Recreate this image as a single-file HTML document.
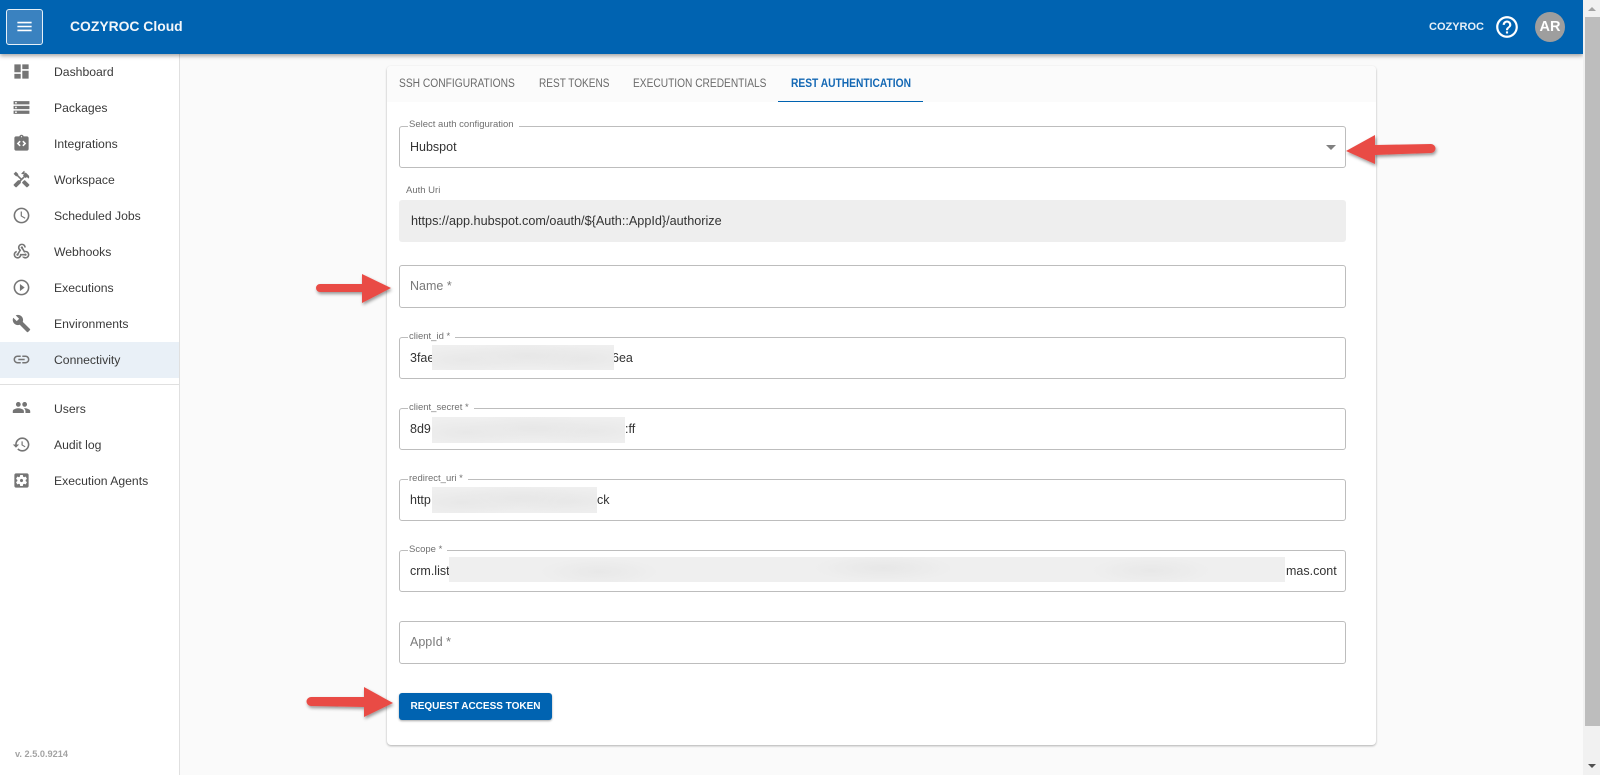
<!DOCTYPE html>
<html><head><meta charset="utf-8"><title>COZYROC Cloud</title>
<style>
*{box-sizing:border-box}
html,body{margin:0;padding:0;width:1600px;height:775px;overflow:hidden;background:#fafafa;font-family:"Liberation Sans",Arial,sans-serif;color:#333}
.a{position:absolute;white-space:nowrap}
#hdr{left:0;top:0;width:1583px;height:54px;background:#0063b1;box-shadow:0 2px 4px rgba(0,0,0,.35);z-index:5}
#btn{left:6px;top:9px;width:37px;height:36px;background:#3a82c0;border:1px solid #e6f0f8;border-radius:3px}
#side{left:0;top:54px;width:180px;height:721px;background:#fff;border-right:1px solid #e0e0e0}
.m{left:54px;font-size:12.2px;line-height:16px;height:16px;color:#3a3a3a}
.i{left:12px;width:19px;height:19px;fill:#757575}
#card{left:387px;top:66px;width:989px;height:679px;background:#fff;border-radius:4px;box-shadow:0 1px 2px rgba(0,0,0,.3)}
#tabs{left:387px;top:66px;width:989px;height:36px;background:#fbfbfb;border-radius:4px 4px 0 0}
.t{top:77px;font-size:11.5px;line-height:14px;color:#6a6a6a;transform-origin:0 50%}
.f{left:399px;width:947px;border:1px solid #bdbdbd;border-radius:3px;background:#fff}
.l{left:408px;font-size:9.5px;line-height:12px;padding:0 5px 0 1px;background:#fff;color:#707070}
.v{left:410px;font-size:12.5px;line-height:16px;color:#333}
.p{left:410px;font-size:12.5px;line-height:16px;color:#7a7a7a}
.b{background:radial-gradient(ellipse 60px 14px at 18% 60%,#e8e8e8,transparent),radial-gradient(ellipse 70px 14px at 52% 45%,#e7e7e7,transparent),radial-gradient(ellipse 60px 14px at 84% 55%,#e8e8e8,transparent),#efefef}
</style></head><body>

<div class="a" id="side"></div>
<div class="a" style="left:0;top:342px;width:179px;height:36px;background:#e9f0f7"></div>
<div class="a" style="left:0;top:384px;width:179px;height:1px;background:#e0e0e0"></div>

<svg class="a i" style="top:62px" viewBox="0 0 24 24"><path d="M3 13h8V3H3v10zm0 8h8v-6H3v6zm10 0h8V11h-8v10zm0-18v6h8V3h-8z"/></svg>
<div class="a m" style="top:64px">Dashboard</div>
<svg class="a i" style="top:98px" viewBox="0 0 24 24"><path d="M2 20h20v-4H2v4zm2-3h2v2H4v-2zM2 4v4h20V4H2zm4 3H4V5h2v2zm-4 7h20v-4H2v4zm2-3h2v2H4v-2z"/></svg>
<div class="a m" style="top:100px">Packages</div>
<svg class="a i" style="top:134px" viewBox="0 0 24 24"><path d="M19 3h-4.18C14.4 1.84 13.3 1 12 1s-2.4.84-2.82 2H5c-1.1 0-2 .9-2 2v14c0 1.1.9 2 2 2h14c1.1 0 2-.9 2-2V5c0-1.1-.9-2-2-2zm-8 11.17-1.41 1.42L6 12l3.59-3.59L11 9.83 8.83 12 11 14.17zm1-9.92c-.41 0-.75-.34-.75-.75s.34-.75.75-.75.75.34.75.75-.34.75-.75.75zm2.41 11.34L13 14.17 15.17 12 13 9.83l1.41-1.42L18 12l-3.59 3.59z"/></svg>
<div class="a m" style="top:136px">Integrations</div>
<svg class="a i" style="top:170px" viewBox="0 0 24 24"><path d="M21.67 18.17l-5.3-5.3h-.99l-2.54 2.54v.99l5.3 5.3c.39.39 1.02.39 1.41 0l2.12-2.12c.39-.38.39-1.02 0-1.41z"/><path d="M17.34 10.19l1.41-1.41 2.12 2.12c1.17-1.17 1.17-3.07 0-4.24l-3.54-3.54-1.41 1.41V1.71l-.7-.71-3.54 3.54.71.71h2.83l-1.41 1.41 1.06 1.06-2.89 2.89-4.13-4.13V5.06L4.83 2.04 2 4.87 5.03 7.9h1.41l4.13 4.13-.85.85H7.61l-5.3 5.3c-.39.39-.39 1.02 0 1.41l2.12 2.12c.39.39 1.02.39 1.41 0l5.3-5.3v-2.12l5.15-5.15 1.05 1.05z"/></svg>
<div class="a m" style="top:172px">Workspace</div>
<svg class="a i" style="top:206px" viewBox="0 0 24 24"><path d="M11.99 2C6.47 2 2 6.48 2 12s4.47 10 9.99 10C17.52 22 22 17.52 22 12S17.52 2 11.99 2zM12 20c-4.42 0-8-3.58-8-8s3.58-8 8-8 8 3.58 8 8-3.58 8-8 8z"/><path d="M12.5 7H11v6l5.25 3.15.75-1.23-4.5-2.67z"/></svg>
<div class="a m" style="top:208px">Scheduled Jobs</div>
<svg class="a i" style="top:242px" viewBox="0 0 24 24"><path d="M10 15h5.88c.27-.31.67-.5 1.12-.5.83 0 1.5.67 1.5 1.5s-.67 1.5-1.5 1.5c-.44 0-.84-.19-1.12-.5H11.9c-.46 2.28-2.48 4-4.9 4-2.76 0-5-2.24-5-5 0-2.42 1.72-4.44 4-4.9v2.07c-1.16.41-2 1.53-2 2.83 0 1.65 1.35 3 3 3s3-1.35 3-3v-1zm2.5-11c1.65 0 3 1.35 3 3h2c0-2.76-2.24-5-5-5s-5 2.24-5 5c0 1.43.6 2.71 1.55 3.62l-2.35 3.9c-.68.14-1.2.75-1.2 1.48 0 .83.67 1.5 1.5 1.5s1.5-.67 1.5-1.5c0-.16-.02-.31-.07-.45l3.38-5.63C10.49 9.61 9.5 8.42 9.5 7c0-1.65 1.35-3 3-3zm4.5 9c-.64 0-1.23.2-1.72.54l-3.05-5.07C11.53 8.35 11 7.74 11 7c0-.83.67-1.5 1.5-1.5S14 6.17 14 7c0 .15-.02.29-.06.43l2.19 3.65c.28-.05.57-.08.87-.08 2.76 0 5 2.24 5 5s-2.24 5-5 5c-1.85 0-3.47-1.01-4.33-2.5h2.67c.48.32 1.05.5 1.66.5 1.65 0 3-1.35 3-3s-1.35-3-3-3z"/></svg>
<div class="a m" style="top:244px">Webhooks</div>
<svg class="a i" style="top:278px" viewBox="0 0 24 24"><path d="M10 16.5l6-4.5-6-4.5v9zM12 2C6.48 2 2 6.48 2 12s4.48 10 10 10 10-4.48 10-10S17.52 2 12 2zm0 18c-4.41 0-8-3.59-8-8s3.59-8 8-8 8 3.59 8 8-3.59 8-8 8z"/></svg>
<div class="a m" style="top:280px">Executions</div>
<svg class="a i" style="top:314px" viewBox="0 0 24 24"><path d="M22.7 19l-9.1-9.1c.9-2.3.4-5-1.5-6.9-2-2-5-2.4-7.4-1.3L9 6 6 9 1.6 4.7C.4 7.1.9 10.1 2.9 12.1c1.9 1.9 4.6 2.4 6.9 1.5l9.1 9.1c.4.4 1 .4 1.4 0l2.3-2.3c.5-.4.5-1.1.1-1.4z"/></svg>
<div class="a m" style="top:316px">Environments</div>
<svg class="a i" style="top:350px" viewBox="0 0 24 24"><path d="M3.9 12c0-1.71 1.39-3.1 3.1-3.1h4V7H7c-2.76 0-5 2.24-5 5s2.24 5 5 5h4v-1.9H7c-1.71 0-3.1-1.39-3.1-3.1zM8 13h8v-2H8v2zm9-6h-4v1.9h4c1.71 0 3.1 1.39 3.1 3.1s-1.39 3.1-3.1 3.1h-4V17h4c2.76 0 5-2.24 5-5s-2.24-5-5-5z"/></svg>
<div class="a m" style="top:352px">Connectivity</div>
<svg class="a i" style="top:398px" viewBox="0 0 24 24"><path d="M16 11c1.66 0 2.99-1.34 2.99-3S17.66 5 16 5c-1.66 0-3 1.34-3 3s1.34 3 3 3zm-8 0c1.66 0 2.99-1.34 2.99-3S9.66 5 8 5C6.34 5 5 6.34 5 8s1.34 3 3 3zm0 2c-2.33 0-7 1.17-7 3.5V19h14v-2.5c0-2.33-4.67-3.5-7-3.5zm8 0c-.29 0-.62.02-.97.05 1.16.84 1.97 1.97 1.97 3.45V19h6v-2.5c0-2.33-4.67-3.5-7-3.5z"/></svg>
<div class="a m" style="top:401px">Users</div>
<svg class="a i" style="top:435px" viewBox="0 0 24 24"><path d="M13 3c-4.97 0-9 4.03-9 9H1l3.89 3.89.07.14L9 12H6c0-3.87 3.13-7 7-7s7 3.13 7 7-3.13 7-7 7c-1.93 0-3.68-.79-4.94-2.06l-1.42 1.42C8.27 19.99 10.51 21 13 21c4.97 0 9-4.03 9-9s-4.03-9-9-9zm-1 5v5l4.28 2.54.72-1.21-3.5-2.08V8H12z"/></svg>
<div class="a m" style="top:437px">Audit log</div>
<svg class="a i" style="top:471px" viewBox="0 0 24 24"><path d="M12 10c-1.1 0-2 .9-2 2s.9 2 2 2 2-.9 2-2-.9-2-2-2zm7-7H5c-1.11 0-2 .9-2 2v14c0 1.1.89 2 2 2h14c1.11 0 2-.9 2-2V5c0-1.1-.89-2-2-2zm-1.75 9c0 .23-.02.46-.05.68l1.48 1.16c.13.11.17.3.08.45l-1.4 2.42c-.09.15-.27.21-.43.15l-1.74-.7c-.36.28-.76.51-1.18.69l-.26 1.85c-.03.17-.18.3-.35.3h-2.8c-.17 0-.32-.13-.35-.29l-.26-1.85c-.43-.18-.82-.41-1.18-.69l-1.74.7c-.16.06-.34 0-.43-.15l-1.4-2.42c-.09-.15-.05-.34.08-.45l1.48-1.16c-.03-.23-.05-.46-.05-.69 0-.23.02-.46.05-.68l-1.48-1.16c-.13-.11-.17-.3-.08-.45l1.4-2.42c.09-.15.27-.21.43-.15l1.74.7c.36-.28.76-.51 1.18-.69l.26-1.85c.03-.17.18-.3.35-.3h2.8c.17 0 .32.13.35.29l.26 1.85c.43.18.82.41 1.18.69l1.74-.7c.16-.06.34 0 .43.15l1.4 2.42c.09.15.05.34-.08.45l-1.48 1.16c.03.23.05.46.05.69z"/></svg>
<div class="a m" style="top:473px">Execution Agents</div>
<div class="a" style="left:15px;top:748px;font-size:9.2px;line-height:12px;font-weight:bold;color:#a3a3a3">v. 2.5.0.9214</div>

<div class="a" id="hdr">
  <div class="a" id="btn"></div>
  <svg class="a" style="left:15px;top:17px;width:19px;height:19px;fill:#fff" viewBox="0 0 24 24"><path d="M3 18h18v-2H3v2zm0-5h18v-2H3v2zm0-7v2h18V6H3z"/></svg>
  <div class="a" style="left:70px;top:17px;font-size:13.9px;line-height:18px;font-weight:bold;color:#f2f6fa">COZYROC Cloud</div>
  <div class="a" style="left:1429px;top:20px;font-size:11px;line-height:14px;font-weight:bold;color:#e6eff7">COZYROC</div>
  <svg class="a" style="left:1494px;top:14px;width:26px;height:26px;fill:#fff" viewBox="0 0 24 24"><path d="M11 18h2v-2h-2v2zm1-16C6.48 2 2 6.48 2 12s4.48 10 10 10 10-4.48 10-10S17.52 2 12 2zm0 18c-4.41 0-8-3.59-8-8s3.59-8 8-8 8 3.59 8 8-3.59 8-8 8zm0-14c-2.21 0-4 1.79-4 4h2c0-1.1.9-2 2-2s2 .9 2 2c0 2-3 1.75-3 5h2c0-2.25 3-2.5 3-5 0-2.21-1.79-4-4-4z"/></svg>
  <div class="a" style="left:1535px;top:12px;width:30px;height:30px;border-radius:50%;background:#9e9e9e;color:#fff;font-size:14.5px;font-weight:bold;line-height:30px;text-align:center">AR</div>
</div>

<div class="a" id="card"></div>
<div class="a" id="tabs"></div>
<div class="a t" style="left:399px;transform:scaleX(.89)">SSH CONFIGURATIONS</div>
<div class="a t" style="left:539px;transform:scaleX(.875)">REST TOKENS</div>
<div class="a t" style="left:633px;transform:scaleX(.885)">EXECUTION CREDENTIALS</div>
<div class="a t" style="left:791px;color:#1468b4;font-weight:bold;transform:scaleX(.89)">REST AUTHENTICATION</div>
<div class="a" style="left:778px;top:101px;width:145px;height:1px;background:#0063b1"></div>

<div class="a f" style="top:126px;height:42px"></div>
<div class="a l" style="top:119px">Select auth configuration</div>
<div class="a v" style="left:410px;top:139px">Hubspot</div>
<div class="a" style="left:1326px;top:145px;width:0;height:0;border-left:5px solid transparent;border-right:5px solid transparent;border-top:5px solid #808080"></div>

<div class="a" style="left:406px;top:185px;font-size:9.5px;line-height:12px;color:#707070">Auth Uri</div>
<div class="a" style="left:399px;top:200px;width:947px;height:42px;background:#eeeeee;border-radius:3px"></div>
<div class="a v" style="left:411px;top:213px;font-size:12.65px">https://app.hubspot.com/oauth/${Auth::AppId}/authorize</div>

<div class="a f" style="top:265px;height:43px"></div>
<div class="a p" style="top:278px">Name *</div>

<div class="a f" style="top:337px;height:42px"></div>
<div class="a l" style="top:331px">client_id *</div>
<div class="a v" style="top:350px">3fae</div>
<div class="a v" style="left:612px;top:350px">6ea</div>
<div class="a b" style="left:432px;top:345px;width:182px;height:25px"></div>

<div class="a f" style="top:408px;height:42px"></div>
<div class="a l" style="top:402px">client_secret *</div>
<div class="a v" style="top:421px">8d9</div>
<div class="a v" style="left:625px;top:421px">:ff</div>
<div class="a b" style="left:432px;top:417px;width:193px;height:26px"></div>

<div class="a f" style="top:479px;height:42px"></div>
<div class="a l" style="top:473px">redirect_uri *</div>
<div class="a v" style="top:492px">http</div>
<div class="a v" style="left:597px;top:492px">ck</div>
<div class="a b" style="left:432px;top:487px;width:165px;height:26px"></div>

<div class="a f" style="top:550px;height:42px"></div>
<div class="a l" style="top:544px">Scope *</div>
<div class="a v" style="top:563px">crm.list</div>
<div class="a v" style="left:1286px;top:563px">mas.cont</div>
<div class="a b" style="left:449px;top:557px;width:836px;height:25px"></div>

<div class="a f" style="top:621px;height:43px"></div>
<div class="a p" style="top:634px">AppId *</div>

<div class="a" style="left:399px;top:693px;width:153px;height:27px;background:#0063b1;border-radius:3px;box-shadow:0 1px 2px rgba(0,0,0,.35);color:#fff;font-size:10px;font-weight:bold;line-height:27px;text-align:center">REQUEST ACCESS TOKEN</div>

<svg class="a" style="left:0;top:0;width:1600px;height:775px;z-index:6" viewBox="0 0 1600 775">
  <defs><filter id="s" x="-20%" y="-50%" width="140%" height="220%"><feDropShadow dx="1" dy="2" stdDeviation="1.5" flood-color="#000" flood-opacity=".4"/></filter></defs>
  <g fill="#e94b45" stroke="none" filter="url(#s)">
    <path d="M1346 151L1375 135V145L1431 144A4.500 4.500 0 0 1 1431 153L1375 155V164Z"/>
    <path d="M391 288L362 274V284H320A4 4 0 0 0 320 292H362V303Z"/>
    <path d="M393 703L364 687V697H311A4 4 0 0 0 311 706L364 707V717Z"/>
  </g>
</svg>

<div class="a" style="left:1583px;top:0;width:17px;height:775px;background:#f1f1f1;z-index:7"></div>
<div class="a" style="left:1585px;top:17px;width:15px;height:709px;background:#bdbdbd;z-index:8"></div>
<div class="a" style="left:1588px;top:7px;width:0;height:0;border-left:4px solid transparent;border-right:4px solid transparent;border-bottom:4px solid #a3a3a3;z-index:8"></div>
<div class="a" style="left:1588px;top:764px;width:0;height:0;border-left:4px solid transparent;border-right:4px solid transparent;border-top:4px solid #505050;z-index:8"></div>
</body></html>
